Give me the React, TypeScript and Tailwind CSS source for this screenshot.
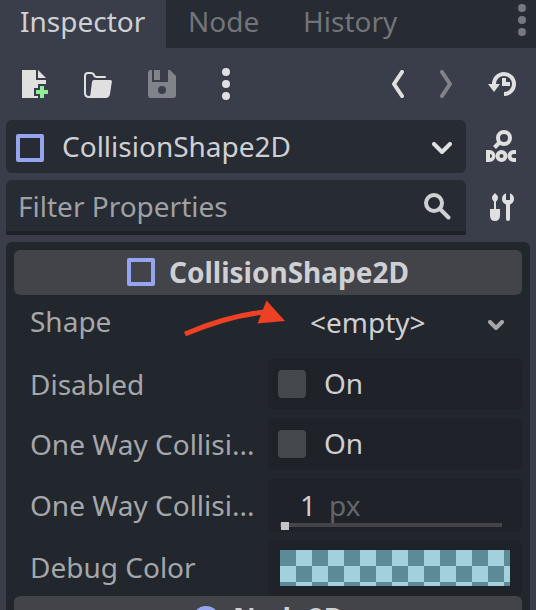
import type { ReactNode } from "react";

const LIGHT = "#e0e0e0";

function Svg({ w, h, box, className = "" , children }: { w: number; h: number; box: string; className?: string; children: ReactNode }) {
  return (
    <svg width={w} height={h} viewBox={box} className={"block shrink-0 " + className} fill="none">
      {children}
    </svg>
  );
}

function Dots({ color }: { color: string }) {
  return (
    <Svg w={8} h={32} box="0 0 8 32">
      <circle cx="4" cy="4" r="4" fill={color} />
      <circle cx="4" cy="16" r="4" fill={color} />
      <circle cx="4" cy="28" r="4" fill={color} />
    </Svg>
  );
}

function ShapeIcon({ className = "" }: { className?: string }) {
  return <div className={"size-7 shrink-0 rounded-[2px] border-4 border-[#96a5f0] " + className} />;
}

function NewIcon() {
  return (
    <Svg w={28} h={28} box="22 72 28 28">
      <path d="M22 72H36V82H46V86H38V90H34V98H38V100H22Z" fill={LIGHT} />
      <path d="M38 72L46 80H38Z" fill={LIGHT} />
      <path d="M40 88h4v4h4v4h-4v4h-4v-4h-4v-4h4Z" fill="#8eef97" />
    </Svg>
  );
}

function FolderIcon() {
  return (
    <Svg w={28} h={28} box="84 72 28 28">
      <path d="M89 99C86.5 99 85 97.5 85 95V78Q85 75 88 75H90.500Q93.500 75 94 77Q94.500 79 97 79H105" stroke={LIGHT} strokeWidth="2" strokeLinecap="round" />
      <path d="M94 82H110.500Q112 82 111.900 83.500L110 96Q109.300 100 105.500 100H88Q90 99 90.400 96.500L92 84Q92.300 82 94 82Z" fill={LIGHT} />
    </Svg>
  );
}

function SaveIcon() {
  return (
    <Svg w={28} h={28} box="0 0 28 28">
      <path fillRule="evenodd" d="M3 0H4V12H20V0H22L28 6V25Q28 28 25 28H3Q0 28 0 25V3Q0 0 3 0ZM14 16A4 4 0 1 0 14 24A4 4 0 1 0 14 16Z" fill="#80838a" />
      <path d="M6 0H12V10H6Z" fill="#80838a" />
    </Svg>
  );
}

function HistoryIcon() {
  return (
    <Svg w={28} h={26} box="488 73 28 26">
      <path d="M494 87V86A10 10 0 1 1 504 96" stroke={LIGHT} strokeWidth="4" />
      <path d="M488 86H500L494 94Z" fill={LIGHT} />
      <path d="M502 80H506V84H510V88H502Z" fill={LIGHT} />
    </Svg>
  );
}

function DocIcon() {
  return (
    <Svg w={30} h={33} box="486 130 30 33">
      <circle cx="504" cy="138" r="6" stroke={LIGHT} strokeWidth="4" />
      <path d="M500 142L494.500 147.500" stroke={LIGHT} strokeWidth="4" />
      <path fillRule="evenodd" d="M486 150H489.500A6 6 0 0 1 489.500 162H486ZM490 154V158Q492 158 492 156T490 154Z" fill={LIGHT} />
      <circle cx="501.500" cy="156" r="4" stroke={LIGHT} strokeWidth="4" />
      <path d="M516 152H513.500A4 4 0 0 0 513.500 160H516" stroke={LIGHT} strokeWidth="4" />
    </Svg>
  );
}

function ToolsIcon() {
  return (
    <Svg w={24} h={28} box="490 193 24 28">
      <path d="M495 193Q498 195.500 498 198Q498 200 496 201.500V209H500V215Q500 221 495 221T490 215V209H494V201.500Q492 200 492 198Q492 195.500 495 193Z" fill={LIGHT} />
      <path d="M506 193.300V200H510V193.300Q514 195 514 199Q514 202.500 510 204.500V219Q510 221 508 221T506 219V204.500Q502 202.500 502 199Q502 195 506 193.300Z" fill={LIGHT} />
    </Svg>
  );
}

function Row({ label, height, pad, field = "bg-[#1f2229]", children }: { label: string; height: string; pad: string; field?: string; children: ReactNode }) {
  return (
    <div className={"flex shrink-0 " + height}>
      <div className={"w-[254px] shrink-0 pl-4 text-[#a5a7aa] " + pad}>{label}</div>
      <div className={"flex w-[254px] shrink-0 rounded-md " + field}>{children}</div>
    </div>
  );
}

function CheckField() {
  return (
    <>
      <div className="mt-3 ml-[10px] size-7 rounded-[4px] bg-[#45484c]" />
      <div className="ml-[18px] pt-1.5 text-[#cecfd1]">On</div>
    </>
  );
}

function ColorField() {
  const cells = Array.from({ length: 45 }, (_, i) => i);
  return (
    <div className="mt-[10px] ml-3 grid h-9 w-[230px] auto-rows-[16px] grid-cols-[repeat(15,16px)] content-start overflow-hidden">
      {cells.map((i) => (
        <div key={i} className={((i % 15) + Math.floor(i / 15)) % 2 ? "bg-[#a2d1dd]" : "bg-[#5c8a95]"} />
      ))}
    </div>
  );
}

export default function App() {
  return (
    <div className="relative flex h-[610px] w-[536px] flex-col overflow-hidden bg-[#393e4a] font-['Noto_Sans',sans-serif] text-[28px] leading-[38px] whitespace-nowrap text-[#cfd0d3]">
      <div className="flex h-12 shrink-0 bg-[#272b33] pt-0.5 text-[#727479]">
        <div className="-mt-0.5 w-[166px] bg-[#393e4a] pt-0.5 pl-5 text-[#cfd0d3]">Inspector</div>
        <div className="w-[115px] pl-[22px]">Node</div>
        <div className="w-[237px] pl-[22px]">History</div>
        <div className="pt-0.5"><Dots color="#77797e" /></div>
      </div>

      <div className="flex h-[72px] shrink-0 items-center pb-[-4px] pl-[22px]">
        <NewIcon />
        <div className="ml-[34px]"><FolderIcon /></div>
        <div className="ml-9"><SaveIcon /></div>
        <div className="ml-[46px]"><Dots color={LIGHT} /></div>
        <Svg w={12} h={28} box="0 0 12 28" className="ml-[162px]">
          <path d="M10 2L2 14L10 26" stroke={LIGHT} strokeWidth="4" strokeLinecap="round" strokeLinejoin="round" />
        </Svg>
        <Svg w={12} h={28} box="0 0 12 28" className="ml-9">
          <path d="M2 2L10 14L2 26" stroke="#80838a" strokeWidth="4" strokeLinecap="round" strokeLinejoin="round" />
        </Svg>
        <div className="ml-[36px]"><HistoryIcon /></div>
      </div>

      <div className="flex h-[53px] shrink-0 pl-1.5">
        <div className="flex w-[460px] rounded-md bg-[#272b33] pl-[10px]">
          <ShapeIcon className="mt-[14px]" />
          <div className="w-[370px] pt-[7px] pl-[18px]">CollisionShape2D</div>
          <Svg w={20} h={13} box="0 0 20 13" className="mt-[22px] ml-[18px]">
            <path d="M2 2L10 10L18 2" stroke={LIGHT} strokeWidth="4" strokeLinecap="round" strokeLinejoin="round" />
          </Svg>
        </div>
        <div className="pt-[10px] pl-5"><DocIcon /></div>
      </div>

      <div className="mt-[7px] flex h-[55px] shrink-0 pl-1.5">
        <div className="flex w-[460px] rounded-t-md border-b-4 border-[#1f2229] bg-[#272b33] pl-3">
          <div className="w-[406px] pt-[7px] text-[#9fa1a4]">Filter Properties</div>
          <Svg w={27} h={27} box="0 0 27 27" className="mt-[13px]">
            <circle cx="10" cy="10" r="8" stroke="#cfd0d3" strokeWidth="4" />
            <path d="M15.500 15.500L24.500 24.500" stroke="#cfd0d3" strokeWidth="4" strokeLinecap="round" />
          </Svg>
        </div>
        <div className="pt-[13px] pl-6"><ToolsIcon /></div>
      </div>

      <div className="mt-[7px] ml-1.5 flex h-[368px] w-[524px] shrink-0 flex-col rounded-t-md bg-[#22262d] px-2 pt-2">
        <div className="flex h-[45px] shrink-0 rounded-md bg-[#424449] pl-[113px] font-bold">
          <ShapeIcon className="mt-2" />
          <div className="pt-[3px] pl-[14px]">CollisionShape2D</div>
        </div>

        <div className="flex flex-col gap-2 pt-[3px]">
          <Row label="Shape" height="h-[52px]" pad="pt-[4px]" field="">
            <div className="w-[220px] pt-[5px] pl-[42px]">&lt;empty&gt;</div>
            <Svg w={16} h={11} box="0 0 16 11" className="mt-[22px]">
              <path d="M2 2L8 8L14 2" stroke="#a5a7aa" strokeWidth="4" strokeLinecap="round" strokeLinejoin="round" />
            </Svg>
          </Row>
          <Row label="Disabled" height="h-[52px]" pad="pt-[7px]"><CheckField /></Row>
          <Row label="One Way Collisi..." height="h-[52px]" pad="pt-[7px]"><CheckField /></Row>
          <Row label="One Way Collisi..." height="h-[54px]" pad="pt-[8px]">
            <div className="flex flex-col pl-3">
              <div className="flex h-[44px] pt-[8px] pl-5">
                <span>1</span>
                <span className="ml-[13px] text-[#64666a]">px</span>
              </div>
              <div className="flex h-2 w-[222px] items-center bg-[linear-gradient(#434549,#434549)] bg-[length:222px_4px] bg-[position:0_1px] bg-no-repeat pl-px">
                <div className="size-2 bg-[#c4c5c8]" />
              </div>
            </div>
          </Row>
          <Row label="Debug Color" height="h-[56px]" pad="pt-[8px]"><ColorField /></Row>
        </div>

        <div className="flex h-[14px] shrink-0 overflow-hidden rounded-t-md bg-[#424449] pl-[178px] font-bold">
          <div className="mt-[10px] size-7 shrink-0 rounded-full border-4 border-[#96a5f0]" />
          <div className="pt-[3px] pl-[13px]">Node2D</div>
        </div>
      </div>

      <svg className="absolute top-[296px] left-[180px]" width="110" height="44" viewBox="180 296 110 44" fill="none">
        <path d="M185 334Q230 315 266 312" stroke="#ec4125" strokeWidth="5" />
        <path d="M266.500 300.500L285 321L257.500 323.500Z" fill="#ec4125" />
      </svg>
    </div>
  );
}
